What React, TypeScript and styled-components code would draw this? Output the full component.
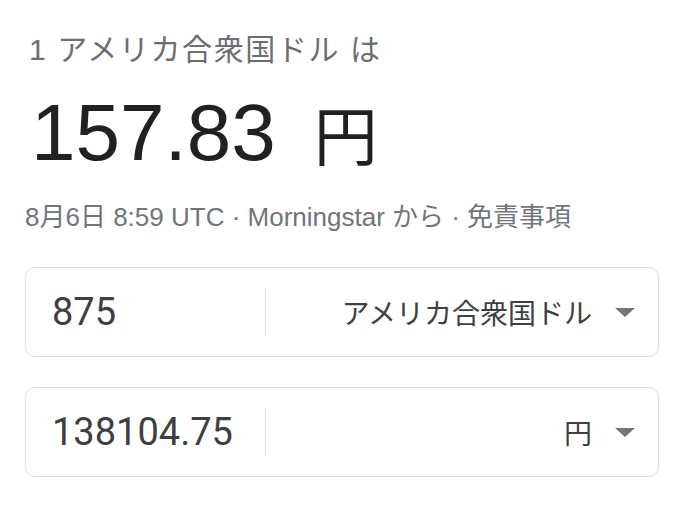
import React from 'react';
import styled, { createGlobalStyle } from 'styled-components';

const GlobalStyle = createGlobalStyle`
  body {
    margin: 0;
    background: #ffffff;
    font-family: "Liberation Sans", "Noto Sans CJK JP", sans-serif;
  }
`;

const Container = styled.div`
  padding: 30px 29px 0 25px;
  display: flex;
  flex-direction: column;
`;

const Heading = styled.div`
  color: #6b6f73;
  font-size: 30px;
  line-height: 40px;
  letter-spacing: 1.6px;
  padding-left: 4px;
`;

const Rate = styled.div`
  color: #202124;
  font-size: 80px;
  line-height: 90px;
  margin-top: 18px;
  padding-left: 6px;
`;

const Unit = styled.span`
  font-size: 64px;
  margin-left: 38px;
`;

const Meta = styled.div`
  color: #70757a;
  font-size: 26px;
  line-height: 32px;
  margin-top: 18px;
`;

const Field = styled.div<{ $gap: number }>`
  display: flex;
  align-items: center;
  box-sizing: border-box;
  height: 90px;
  border: 1px solid #dadce0;
  border-radius: 10px;
  margin-top: ${(p) => p.$gap}px;
`;

const Amount = styled.div`
  width: 239px;
  padding-left: 26px;
  box-sizing: border-box;
  font-family: Roboto, sans-serif;
  font-size: 38px;
  color: #3c4043;
`;

const Divider = styled.div`
  width: 1px;
  height: 46px;
  background: #dadce0;
`;

const Currency = styled.div`
  flex: 1;
  display: flex;
  justify-content: flex-end;
  align-items: center;
  gap: 23px;
  padding-right: 23px;
  font-family: Roboto, "Noto Sans CJK JP", sans-serif;
  font-size: 28px;
  color: #3c4043;
`;

const Caret = () => (
  <svg width="20" height="9" viewBox="0 0 20 9">
    <path d="M0 0 L20 0 L10 9 Z" fill="#757575" />
  </svg>
);

const rows = [
  { amount: '875', currency: 'アメリカ合衆国ドル', gap: 34 },
  { amount: '138104.75', currency: '円', gap: 30 },
];

const App = () => {
  return (
    <>
      <GlobalStyle />
      <Container>
        <Heading>1 アメリカ合衆国ドル は</Heading>
        <Rate>
          157.83<Unit>円</Unit>
        </Rate>
        <Meta>8月6日 8:59 UTC · Morningstar から · 免責事項</Meta>
        {rows.map((row) => (
          <Field key={row.amount} $gap={row.gap}>
            <Amount>{row.amount}</Amount>
            <Divider />
            <Currency>
              {row.currency}
              <Caret />
            </Currency>
          </Field>
        ))}
      </Container>
    </>
  );
};

export default App;
